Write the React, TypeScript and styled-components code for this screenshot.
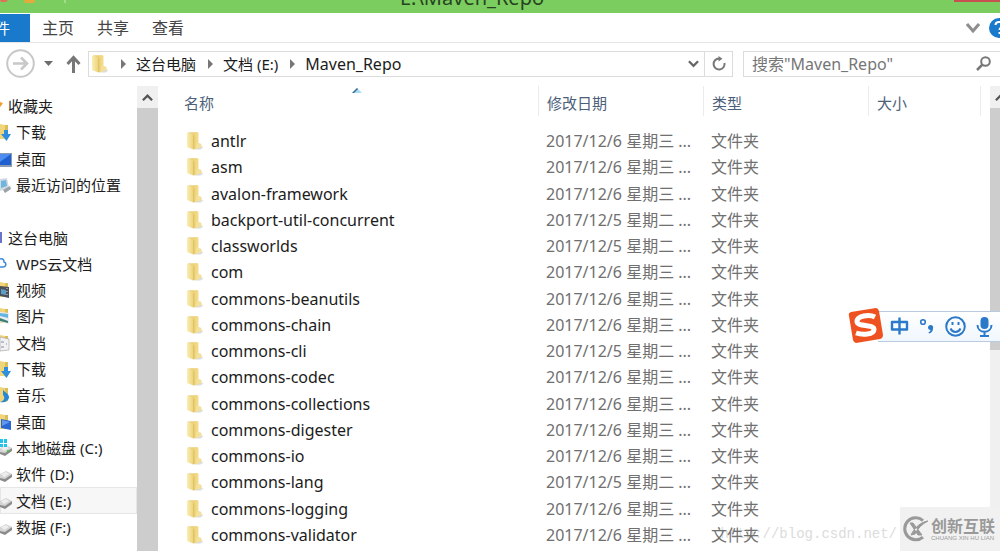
import React from "react";
import styled, { createGlobalStyle } from "styled-components";

const GlobalStyle = createGlobalStyle`
  *, *::before, *::after { box-sizing: border-box; }
  body {
    margin: 0;
    overflow: hidden;
    background: #fff;
    color: #1c1c1c;
    font: 15px/20px "Noto Sans", "Noto Sans CJK SC", sans-serif;
  }
  button, input { font: inherit; color: inherit; }
  button { border: 0; padding: 0; background: none; }
  svg { display: block; flex: none; }
`;

const Window = styled.div`
  position: relative;
  display: flex;
  flex-direction: column;
  height: 100vh;
  overflow: hidden;
`;

/* Title bar */
const TitleBar = styled.header`
  display: grid;
  grid-template-columns: 68px 1fr 46px;
  grid-template-rows: 13px;
  height: 13px;
  flex: none;
  overflow: hidden;
  background: #7bcd60;
`;
const WindowTitle = styled.h1`
  margin: 0;
  align-self: end;
  padding: 0 78px 5px 0;
  color: #27441f;
  font-size: 20px;
  line-height: 20px;
  font-weight: 400;
  text-align: center;
`;
const CloseButton = styled.button`
  height: 2px;
  background: #c75050;
`;

/* Ribbon */
const Ribbon = styled.div`
  display: flex;
  align-items: center;
  gap: 24px;
  height: 30px;
  flex: none;
  border-bottom: 1px solid #e6e6e6;
  color: #444;
`;
const FileTab = styled.button`
  display: flex;
  justify-content: flex-end;
  align-items: center;
  width: 30px;
  height: 28px;
  margin: 0 -12px 0 0;
  padding-right: 20px;
  overflow: hidden;
  white-space: nowrap;
  background: #1979ca;
  color: #fff;
`;
const RibbonTab = styled.button`
  height: 28px;
  font-size: 16px;
  margin-right: -1px;
`;
const RibbonEnd = styled.div`
  display: flex;
  gap: 9px;
  margin-left: auto;
`;

/* Address row */
const AddressRow = styled.div`
  display: flex;
  align-items: center;
  height: 43px;
  flex: none;
  padding: 7px 0 9px 6px;
`;
const UpButton = styled.button`
  margin: 0 7px 0 13px;
`;
const HistoryButton = styled.button`
  margin-left: 9px;
`;
const AddressBox = styled.div`
  display: flex;
  flex: 1;
  height: 26px;
  border: 1px solid #dcdcdc;
`;
const Crumbs = styled.nav`
  display: flex;
  flex: 1;
  align-items: center;
  padding-left: 2px;
`;
const Crumb = styled.button`
  display: flex;
  align-items: center;
  gap: 9px;
  margin-left: 12px;
  white-space: nowrap;
  &[aria-current] { font-size: 16px; }
`;
const BoxButton = styled.button<{ $divided?: boolean }>`
  display: grid;
  place-items: center;
  width: ${(p) => (p.$divided ? 28 : 22)}px;
  border-left: ${(p) => (p.$divided ? "1px solid #dcdcdc" : "0")};
`;
const SearchBox = styled.label`
  display: flex;
  align-items: center;
  width: 257px;
  height: 26px;
  margin-left: 10px;
  padding: 0 9px 0 8px;
  border: 1px solid #dcdcdc;
  border-right: 0;
`;
const SearchInput = styled.input`
  flex: 1;
  min-width: 0;
  padding: 0;
  border: 0;
  outline: 0;
  background: none;
  font-size: 16px;
  &::placeholder { color: #767676; opacity: 1; }
`;

/* Body */
const Body = styled.div`
  display: flex;
  flex: 1;
  min-height: 0;
`;
const Sidebar = styled.nav`
  width: 137px;
  flex: none;
  overflow: hidden;
  padding-top: 7px;
`;
const Tree = styled.ul`
  display: grid;
  grid-template-rows: repeat(17, 1fr);
  height: 447px;
  margin: 0;
  padding: 0;
  list-style: none;
`;
const TreeItem = styled.li<{ $root?: boolean; $selected?: boolean; $row: number }>`
  grid-row: ${(p) => p.$row};
  display: grid;
  grid-template-columns: ${(p) => (p.$root ? 8 : 16)}px 1fr;
  align-items: center;
  white-space: nowrap;
  background: ${(p) => (p.$selected ? "#f7f7f7" : "transparent")};
  box-shadow: ${(p) => (p.$selected ? "inset 0 0 0 1px #e6e6e6" : "none")};
`;
const TreeLink = styled.a`
  grid-column: 2;
  color: inherit;
  text-decoration: none;
`;

const ScrollTrack = styled.div<{ $width: number }>`
  display: flex;
  flex-direction: column;
  width: ${(p) => p.$width}px;
  flex: none;
  overflow: hidden;
  background: #f0f0f0;
`;
const ScrollArrow = styled.button`
  display: flex;
  align-items: center;
  height: 22px;
  flex: none;
  padding-left: 5px;
`;
const ScrollThumb = styled.div<{ $size: string }>`
  height: ${(p) => p.$size};
  background: #cdcdcd;
`;

const Files = styled.main`
  flex: 1;
  min-width: 0;
  padding: 0 9px 0 18px;
  overflow: hidden;
`;
const FileTable = styled.table`
  display: block;
`;
const Row = styled.tr`
  display: grid;
  grid-template-columns: minmax(0, 1fr) 165px 165px 112px;
  align-items: center;
`;
const Head = styled.thead`
  display: block;
  margin-bottom: 12px;
  color: #4c607a;
`;
const HeadCell = styled.th`
  position: relative;
  height: 30px;
  padding: 7px 8px 3px;
  border-right: 1px solid #ebebeb;
  font-weight: 400;
  text-align: left;
`;
const SortMark = styled.svg`
  position: absolute;
  top: 1px;
  left: 50%;
  margin-left: -5px;
`;
const Rows = styled.tbody`
  display: grid;
  grid-auto-rows: 1fr;
  height: 420px;
  font-size: 16px;
`;
const NameCell = styled.td`
  display: flex;
  align-items: center;
  gap: 7px;
  padding: 0 0 0 10px;
`;
const InfoCell = styled.td`
  padding: 0 7px;
  color: #707070;
  white-space: nowrap;
`;

/* Overlays */
const ImeBar = styled.div`
  position: absolute;
  top: 307px;
  right: 0;
  display: flex;
  align-items: center;
  height: 38px;
`;
const ImeButtons = styled.div`
  display: flex;
  align-items: center;
  gap: 10px;
  height: 31px;
  margin-left: -6px;
  padding: 0 7px 0 12px;
  border: solid #b9cbe0;
  border-width: 1px 0;
  background: linear-gradient(#fff, #f0f7fe);
`;
const ImeLogo = styled.svg`
  position: relative;
  z-index: 1;
`;
const Watermark = styled.span`
  position: absolute;
  right: 103px;
  bottom: 8px;
  color: #dcdcdc;
  font: 14px/18px "Liberation Mono", monospace;
  z-index: -1;
`;
const Brand = styled.div`
  position: absolute;
  right: 0;
  bottom: 0;
  display: flex;
  align-items: center;
  gap: 2px;
  width: 100px;
  height: 44px;
  padding-left: 2px;
  background: #f1f1f1;
  color: #999;
  white-space: nowrap;
`;
const BrandName = styled.strong`
  display: block;
  font-size: 16px;
  line-height: 18px;
  font-weight: 700;
`;
const BrandSub = styled.small`
  display: block;
  font: 6px/6px "Liberation Sans", sans-serif;
`;

const Folder = () => (
  <svg width="18" height="20" viewBox="0 0 18 20" aria-hidden="true">
    <defs>
      <linearGradient id="foldFront" x1="0" x2="1">
        <stop offset="0" stopColor="#fbeeb2" />
        <stop offset="1" stopColor="#ecd27a" />
      </linearGradient>
      <linearGradient id="foldBack" x1="0" x2="1">
        <stop offset="0" stopColor="#e3c464" />
        <stop offset="1" stopColor="#f4dd8c" />
      </linearGradient>
    </defs>
    <path d="M12 15l5.500 1.500-3 2H8z" fill="#dcdce0" />
    <path d="M2 1.500L11.500 1l1 1v15L7 18.500z" fill="url(#foldBack)" />
    <path d="M1 2l1-.5L6.500 3q1 .4 1 1.500v14L2 16.500q-1-.4-1-1.500z" fill="url(#foldFront)" />
    <path d="M7.800 4.500v13.500" stroke="#cfae50" strokeWidth="0.600" />
    <path d="M10.500 11.500l4 1q1 .3 1 1.500l.5 2-6.500 2z" fill="#f3e09a" />
  </svg>
);

const Chevron = ({ up, size = 12, color = "#666" }: { up?: boolean; size?: number; color?: string }) => (
  <svg width={size} height={size} viewBox="0 0 12 12" fill="none" stroke={color} strokeWidth="2.500" aria-hidden="true">
    <path d={up ? "M1 9l5-5 5 5" : "M1 3.500l5 5 5-5"} />
  </svg>
);

const CrumbArrow = () => (
  <svg width="6" height="10" viewBox="0 0 6 10" aria-hidden="true">
    <path d="M0 0l5 5-5 5z" fill="#777" />
  </svg>
);

type Kind = "star" | "down" | "desk" | "recent" | "pc" | "cloud" | "video" | "image" | "doc" | "music" | "deskfolder" | "system" | "disk";

const drive = (
  <g>
    <path d="M0 10l6-3 6 3-7 6-5-2z" fill="#d4d4d4" />
    <path d="M0 14l5 1 7-5v3l-7 5-5-2z" fill="#8b8b8b" />
    <path d="M1 10l5-2 3 2-5 3z" fill="#eee" />
  </g>
);
const half = (
  <g>
    <path d="M0 2l5 1v14H0z" fill="#f0d679" />
    <path d="M5 3l3 0v13l-3 1z" fill="#dcbb5b" />
  </g>
);

const art: Record<Kind, React.ReactNode> = {
  star: <path d="M0 6l3 1-2 3-1 1z" fill="#f0a030" />,
  down: <g>{half}<path d="M4 8h4v4h3l-4.500 7L1 12h3z" fill="#2f8fdc" /></g>,
  desk: <g><path d="M0 4h12v14H0z" fill="#8d9bb0" /><path d="M0 5h11v11H0z" fill="#1f5fd0" /><path d="M0 5h11L0 13z" fill="#4d8cf0" /></g>,
  recent: <g><path d="M0 4l7-1 2 10-9 3z" fill="#cfdae4" /><path d="M1 6l5-1 1 6-6 2z" fill="#6fb5dc" /><path d="M3 15l7-4 1 3-6 4z" fill="#9aa2a8" /></g>,
  pc: <path d="M0 4h2v11H0z" fill="#6a75c8" />,
  cloud: <path d="M0 5c3-1 4 1 4 3 3 1 2 5-1 5H0" fill="none" stroke="#3b8ad8" strokeWidth="1.500" />,
  video: <g>{half}<path d="M0 6l9 1v11l-9-2z" fill="#4c5058" /><path d="M1 9l5 1v5l-5-1z" fill="#5d9ec9" /><path d="M7 8v9" stroke="#ddd" strokeDasharray="1 2" /></g>,
  image: <g>{half}<path d="M0 6l9 1v11l-9-2z" fill="#e8eef2" /><path d="M0 7l8 1v4l-8-2z" fill="#66b4e4" /><path d="M0 12l8 3v2l-8-2z" fill="#3d7f74" /></g>,
  doc: <g>{half}<path d="M0 4l9 2v11l-9 1z" fill="#f1f1f1" stroke="#a9a9a9" strokeWidth="0.700" /><path d="M1 9h3M6 11h1M1 14h3" stroke="#7f8bab" /></g>,
  music: <g>{half}<path d="M3 4c0 3 6 4 6 8 0 4-5 6-9 5 5-1 5-5 3-7z" fill="#2687d8" /></g>,
  deskfolder: <g>{half}<path d="M1 7l10 2v9L1 16z" fill="#2a66d4" /><path d="M2 8l8 2-8 4z" fill="#5f98ee" /></g>,
  system: <g>{drive}<path d="M0 1h3v4H0zM4 1h3v4H4zM0 6h3v3H0zM4 6h3v3H4z" fill="#1fc4ea" /><path d="M7 13h3" stroke="#48b848" strokeWidth="1.500" /></g>,
  disk: drive,
};

const TreeIcon = ({ kind }: { kind: Kind }) => (
  <svg width={kind === "star" || kind === "pc" ? 8 : 12} height="20" viewBox={kind === "star" || kind === "pc" ? "0 0 8 20" : "0 0 12 20"} aria-hidden="true">
    {art[kind]}
  </svg>
);

const tree: { row: number; label: string; kind: Kind; root?: boolean; selected?: boolean }[] = [
  { row: 1, label: "收藏夹", kind: "star", root: true },
  { row: 2, label: "下载", kind: "down" },
  { row: 3, label: "桌面", kind: "desk" },
  { row: 4, label: "最近访问的位置", kind: "recent" },
  { row: 6, label: "这台电脑", kind: "pc", root: true },
  { row: 7, label: "WPS云文档", kind: "cloud" },
  { row: 8, label: "视频", kind: "video" },
  { row: 9, label: "图片", kind: "image" },
  { row: 10, label: "文档", kind: "doc" },
  { row: 11, label: "下载", kind: "down" },
  { row: 12, label: "音乐", kind: "music" },
  { row: 13, label: "桌面", kind: "deskfolder" },
  { row: 14, label: "本地磁盘 (C:)", kind: "system" },
  { row: 15, label: "软件 (D:)", kind: "disk" },
  { row: 16, label: "文档 (E:)", kind: "disk", selected: true },
  { row: 17, label: "数据 (F:)", kind: "disk" },
];

const wed = "2017/12/6 星期三 ...";
const tue = "2017/12/5 星期二 ...";
const files: [string, string][] = [
  ["antlr", wed],
  ["asm", wed],
  ["avalon-framework", wed],
  ["backport-util-concurrent", tue],
  ["classworlds", tue],
  ["com", wed],
  ["commons-beanutils", wed],
  ["commons-chain", wed],
  ["commons-cli", tue],
  ["commons-codec", wed],
  ["commons-collections", wed],
  ["commons-digester", wed],
  ["commons-io", wed],
  ["commons-lang", tue],
  ["commons-logging", wed],
  ["commons-validator", wed],
];

export default function App() {
  return (
    <Window>
      <GlobalStyle />
      <TitleBar>
        <svg width="68" height="13" viewBox="0 0 68 13" aria-hidden="true">
          <path d="M0 0h8l-2 2H1z" fill="#e0705a" />
          <path d="M24 0h10l2 2-4 1h-7z" fill="#e5a93c" />
          <path d="M65 0v3" stroke="#c5e8b8" />
        </svg>
        <WindowTitle>E:\Maven_Repo</WindowTitle>
        <CloseButton aria-label="关闭" />
      </TitleBar>

      <Ribbon>
        <FileTab>文件</FileTab>
        <RibbonTab>主页</RibbonTab>
        <RibbonTab>共享</RibbonTab>
        <RibbonTab>查看</RibbonTab>
        <RibbonEnd>
          <button aria-label="展开功能区">
            <svg width="14" height="20" viewBox="0 0 14 20" fill="none" stroke="#8e8e8e" strokeWidth="3" aria-hidden="true">
              <path d="M1 6l6 7 6-7" />
            </svg>
          </button>
          <button aria-label="帮助">
            <svg width="11" height="20" viewBox="0 0 11 20" aria-hidden="true">
              <circle cx="10" cy="10" r="10" fill="#1979ca" />
              <path d="M6.500 7c0-4 7-4 7 0 0 2-3 2.500-3 5M10.500 14v2" fill="none" stroke="#fff" strokeWidth="2" />
            </svg>
          </button>
        </RibbonEnd>
      </Ribbon>

      <AddressRow>
        <button aria-label="前进">
          <svg width="29" height="29" viewBox="0 0 29 29" fill="none" stroke="#c8c8c8" aria-hidden="true">
            <circle cx="14.500" cy="14.500" r="13.300" strokeWidth="2" />
            <path d="M7 14.500h14M15 8.500l6 6-6 6" strokeWidth="2.600" />
          </svg>
        </button>
        <HistoryButton aria-label="最近的位置">
          <svg width="9" height="6" viewBox="0 0 9 6" aria-hidden="true">
            <path d="M0 0h9L4.500 5z" fill="#6c6c6c" />
          </svg>
        </HistoryButton>
        <UpButton aria-label="上移">
          <svg width="15" height="18" viewBox="0 0 15 18" fill="none" stroke="#777" strokeWidth="3" aria-hidden="true">
            <path d="M7.500 18V3M1.500 9l6-6.500 6 6.500" />
          </svg>
        </UpButton>
        <AddressBox>
          <Crumbs aria-label="路径">
            <Folder />
            <Crumb><CrumbArrow />这台电脑</Crumb>
            <Crumb><CrumbArrow />文档 (E:)</Crumb>
            <Crumb aria-current="page"><CrumbArrow />Maven_Repo</Crumb>
          </Crumbs>
          <BoxButton aria-label="上一个位置"><Chevron size={11} /></BoxButton>
          <BoxButton $divided aria-label="刷新">
            <svg width="16" height="16" viewBox="0 0 16 16" fill="none" stroke="#777" strokeWidth="2" aria-hidden="true">
              <path d="M13.500 7a5.500 5.500 0 1 1-5.500-4.500" />
              <path d="M7.500 0v5.500l4-2.700z" fill="#777" stroke="none" />
            </svg>
          </BoxButton>
        </AddressBox>
        <SearchBox>
          <SearchInput aria-label="搜索" placeholder={'搜索"Maven_Repo"'} />
          <svg width="15" height="15" viewBox="0 0 15 15" fill="none" stroke="#777" strokeWidth="2" aria-hidden="true">
            <circle cx="9.500" cy="5.500" r="4.300" />
            <path d="M6.500 8.500L1 14" strokeWidth="2.500" />
          </svg>
        </SearchBox>
      </AddressRow>

      <Body>
        <Sidebar aria-label="导航窗格">
          <Tree>
            {tree.map((t) => (
              <TreeItem key={t.row} $row={t.row} $root={t.root} $selected={t.selected}>
                <TreeIcon kind={t.kind} />
                <TreeLink href="#">{t.label}</TreeLink>
              </TreeItem>
            ))}
          </Tree>
        </Sidebar>
        <ScrollTrack $width={21}>
          <ScrollArrow aria-label="向上滚动"><Chevron up size={11} color="#555" /></ScrollArrow>
          <ScrollThumb $size="100%" />
        </ScrollTrack>

        <Files>
          <FileTable>
            <Head>
              <Row>
                <HeadCell>
                  名称
                  <SortMark width="11" height="6" viewBox="0 0 11 6" aria-hidden="true">
                    <path d="M0 6l5-5 5 5z" fill="#a8dcf2" />
                    <path d="M0 6l5-5 1 1-4 4z" fill="#3a6a8c" />
                  </SortMark>
                </HeadCell>
                <HeadCell>修改日期</HeadCell>
                <HeadCell>类型</HeadCell>
                <HeadCell>大小</HeadCell>
              </Row>
            </Head>
            <Rows>
              {files.map(([name, date]) => (
                <Row key={name}>
                  <NameCell><Folder />{name}</NameCell>
                  <InfoCell>{date}</InfoCell>
                  <InfoCell>文件夹</InfoCell>
                  <InfoCell />
                </Row>
              ))}
            </Rows>
          </FileTable>
        </Files>
        <ScrollTrack $width={10}>
          <ScrollArrow aria-label="向上滚动"><Chevron up size={11} color="#555" /></ScrollArrow>
          <ScrollThumb $size="52%" />
        </ScrollTrack>
      </Body>

      <Watermark>http://blog.csdn.net/</Watermark>

      <ImeBar>
        <ImeLogo width="37" height="38" viewBox="0 0 37 38" aria-hidden="true">
          <path d="M2 9Q1 6 4 5L29 1Q31 1 32 4L36 28Q36 31 33 32L9 36Q7 36 6 33z" fill="#ee5220" />
          <path d="M28 10C22 7 10 9 10 14.500C10 20 27 17 27 22.500C27 28 15 28 9 26" fill="none" stroke="#fff" strokeWidth="5" />
        </ImeLogo>
        <ImeButtons>
          <button aria-label="中文">
            <svg width="19" height="20" viewBox="0 0 19 20" fill="none" stroke="#2b79c9" strokeWidth="2.400" strokeLinejoin="round" aria-hidden="true">
              <path d="M2 6h15v7.500H2zM9.500 1.500v17" />
            </svg>
          </button>
          <button aria-label="标点">
            <svg width="16" height="18" viewBox="0 0 16 18" aria-hidden="true">
              <circle cx="4" cy="5" r="2.300" fill="none" stroke="#2b79c9" strokeWidth="1.600" />
              <path d="M9 10.500a2.600 2.600 0 1 1 5 1c0 3-2 4.500-4 5l-.5-1.200c1.200-.5 2-1.200 2-2.300-1.500 0-2.500-1-2.500-2.500z" fill="#2b79c9" />
            </svg>
          </button>
          <button aria-label="表情">
            <svg width="21" height="21" viewBox="0 0 21 21" fill="none" stroke="#2b79c9" strokeWidth="2" aria-hidden="true">
              <circle cx="10.500" cy="10.500" r="9.300" />
              <path d="M7.500 6v3M13.500 6v3M5.500 12.500c2 4.500 8 4.500 10 0" />
            </svg>
          </button>
          <button aria-label="语音">
            <svg width="17" height="21" viewBox="0 0 17 21" fill="none" stroke="#2b79c9" strokeWidth="2" aria-hidden="true">
              <rect x="4.500" y="1" width="8" height="12" rx="4" fill="#2b79c9" stroke="none" />
              <path d="M1.500 9c0 9 14 9 14 0M8.500 15v4M4 20h9" />
            </svg>
          </button>
        </ImeButtons>
      </ImeBar>

      <Brand>
        <svg width="27" height="28" viewBox="0 0 27 28" fill="none" stroke="#999" aria-hidden="true">
          <path d="M21 5.500A11 11 0 1 0 21 22" strokeWidth="3" />
          <path d="M8 8l3 0 9 12h-4zM26 6c-7 1-13 6-17 14l4-1c3-6 7-10 13-13z" fill="#999" strokeWidth="1" />
        </svg>
        <div>
          <BrandName>创新互联</BrandName>
          <BrandSub>CHUANG XIN HU LIAN</BrandSub>
        </div>
      </Brand>
    </Window>
  );
}
